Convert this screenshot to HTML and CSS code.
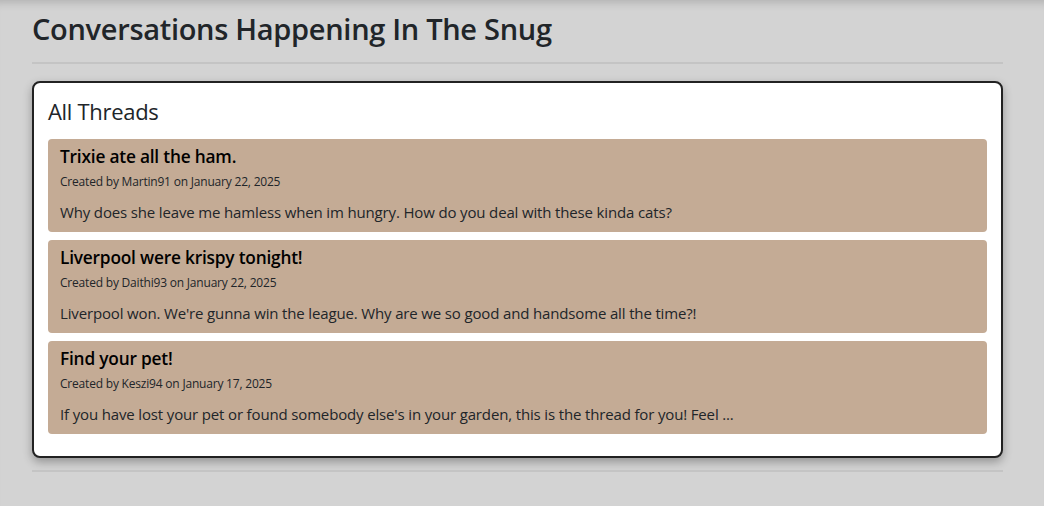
FILE: index.html
```html
<!DOCTYPE html>
<html lang="en">
<head>
<meta charset="utf-8">
<title>The Snug</title>
<link rel="stylesheet" href="styles.css">
</head>
<body>
<div class="page">
  <h2 class="page-title">Conversations Happening In The Snug</h2>
  <hr class="rule rule-top">
  <section class="card">
    <h4 class="card-title">All Threads</h4>
    <div class="thread">
      <h5 class="thread-title">Trixie ate all the ham.</h5>
      <p class="thread-meta">Created by Martin91 on January 22, 2025</p>
      <p class="thread-body">Why does she leave me hamless when im hungry. How do you deal with these kinda cats?</p>
    </div>
    <div class="thread">
      <h5 class="thread-title">Liverpool were krispy tonight!</h5>
      <p class="thread-meta">Created by Daithi93 on January 22, 2025</p>
      <p class="thread-body">Liverpool won. We're gunna win the league. Why are we so good and handsome all the time?!</p>
    </div>
    <div class="thread">
      <h5 class="thread-title">Find your pet!</h5>
      <p class="thread-meta">Created by Keszi94 on January 17, 2025</p>
      <p class="thread-body">If you have lost your pet or found somebody else's in your garden, this is the thread for you! Feel ...</p>
    </div>
  </section>
  <hr class="rule rule-bottom">
</div>
</body>
</html>
```

FILE: styles.css
```css
html, body {
  margin: 0;
  padding: 0;
  background: #d3d3d3;
  height: 100%;
}
body {
  font-family: "Open Sans", "Noto Sans", sans-serif;
  color: #212529;
  box-shadow: inset 0 10px 10px -8px rgba(0, 0, 0, 0.18);
}
.page {
  padding: 8px 41px 0 32px;
}
.page-title {
  margin: 0;
  font-size: 29px;
  font-weight: 600;
  line-height: 42px;
  letter-spacing: -0.3px;
}
.rule {
  border: 0;
  border-top: 2px solid #c4c4c4;
}
.rule-top {
  margin: 12px 0 17px;
}
.rule-bottom {
  margin: 12px 0 0;
}
.card {
  background: #fff;
  border: 2px solid #222;
  border-radius: 8px;
  box-shadow: 0 4px 10px rgba(0, 0, 0, 0.3);
  padding: 12px 14px 22px;
  display: flex;
  flex-direction: column;
  gap: 8px;
}
.card-title {
  margin: 0 0 4px;
  font-size: 22px;
  font-weight: 500;
  line-height: 32px;
  letter-spacing: -0.3px;
}
.thread {
  background: #c4ab95;
  border-radius: 4px;
  padding: 6px 12px 6px;
}
.thread-title {
  margin: 0;
  font-size: 17.3px;
  font-weight: 600;
  line-height: 24px;
  color: #000;
  letter-spacing: -0.2px;
}
.thread-meta {
  margin: 4px 0 7px;
  font-size: 12px;
  line-height: 18px;
  letter-spacing: -0.2px;
}
.thread-body {
  margin: 0;
  font-size: 15px;
  line-height: 28px;
  letter-spacing: -0.15px;
}
```
